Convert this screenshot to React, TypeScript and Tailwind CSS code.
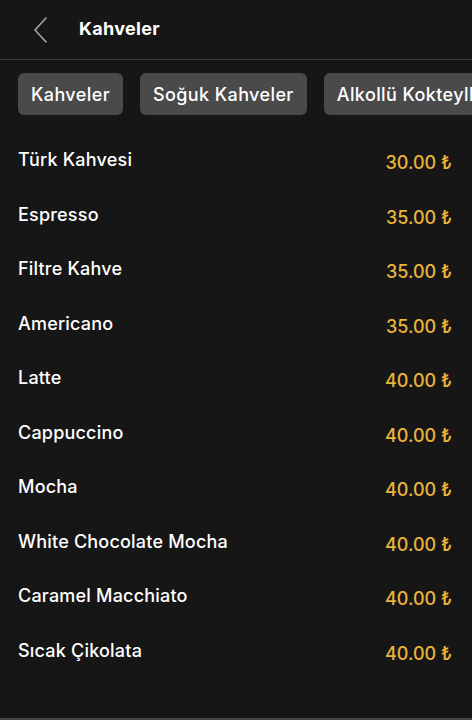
import React from 'react'

const categories = ['Kahveler', 'Soğuk Kahveler', 'Alkollü Kokteyller']

const items = [
  { name: 'Türk Kahvesi', price: '30.00' },
  { name: 'Espresso', price: '35.00' },
  { name: 'Filtre Kahve', price: '35.00' },
  { name: 'Americano', price: '35.00' },
  { name: 'Latte', price: '40.00' },
  { name: 'Cappuccino', price: '40.00' },
  { name: 'Mocha', price: '40.00' },
  { name: 'White Chocolate Mocha', price: '40.00' },
  { name: 'Caramel Macchiato', price: '40.00' },
  { name: 'Sıcak Çikolata', price: '40.00' },
]

export default function App() {
  return (
    <div
      className="w-[472px] h-[720px] bg-[#161616] text-white overflow-hidden flex flex-col border-b-2 border-[#454545]"
      style={{ fontFamily: 'Inter, "Noto Sans", sans-serif' }}
    >
      <header className="h-[60px] shrink-0 flex items-center border-b border-[#3a3a3a]">
        <button className="w-[79px] h-full flex items-center pl-[33px] text-[#a8a8a8]">
          <svg width="16" height="28" viewBox="0 0 16 28" fill="none">
            <path d="M13 2 L2 14 L13 26" stroke="currentColor" strokeWidth="1.6" strokeLinecap="round" strokeLinejoin="round" />
          </svg>
        </button>
        <h1 className="text-[18px] font-bold tracking-[0.3px] -mt-[2px]">Kahveler</h1>
      </header>

      <nav className="flex gap-[17px] pl-[18px] pt-[13px] overflow-hidden shrink-0">
        {categories.map((c) => (
          <span
            key={c}
            className="shrink-0 h-[42px] px-[13px] flex items-center rounded-[6px] bg-[#4a4a4a] text-[18px] font-medium tracking-[0.4px] whitespace-nowrap"
          >
            {c}
          </span>
        ))}
      </nav>

      <ul className="flex flex-col pt-[33px] pl-[18px] pr-[20px]">
        {items.map((it) => (
          <li key={it.name} className="h-[54.5px] flex justify-between items-start">
            <span className="text-[18px] font-medium tracking-[0.2px] leading-[24px]">{it.name}</span>
            <span className="text-[18px] font-medium leading-[24px] text-[#e9b43a] mt-[3px]">
              {it.price} ₺
            </span>
          </li>
        ))}
      </ul>
    </div>
  )
}
